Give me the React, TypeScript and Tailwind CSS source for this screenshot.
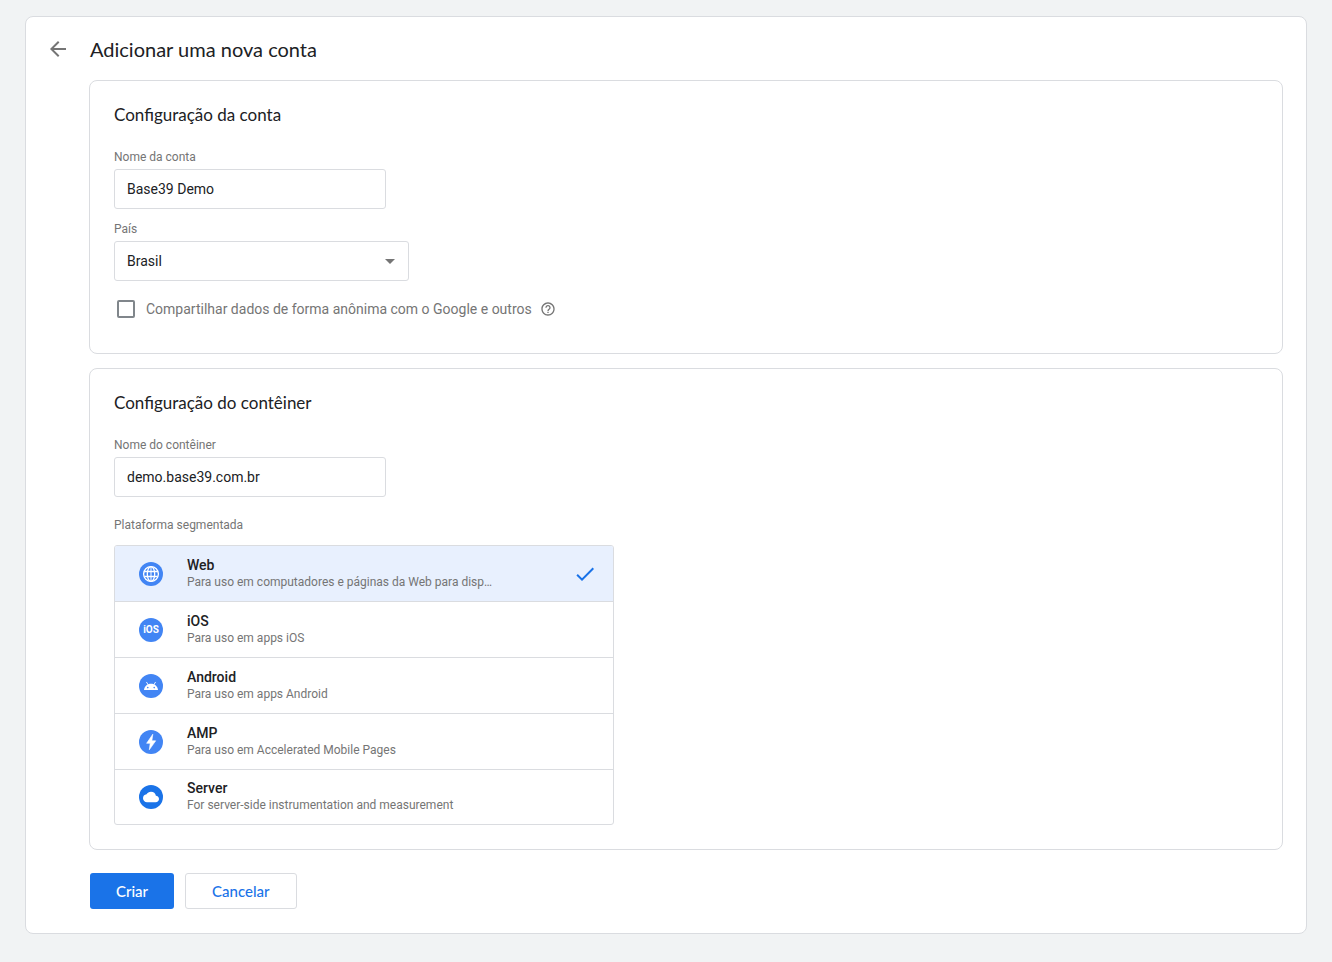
import { useState } from "react";
import type { ReactNode } from "react";
import { MdArrowBack, MdArrowDropDown, MdCheck, MdCloud, MdHelpOutline } from "react-icons/md";

function GlobeIcon() {
  return (
    <svg viewBox="0 0 24 24" className="size-6" fill="none" stroke="currentColor" strokeWidth="1.3">
      <circle cx="12" cy="12" r="7.4" />
      <ellipse cx="12" cy="12" rx="3.7" ry="7.4" />
      <path d="M5.300 9.500h13.400M5.300 14.500h13.400" />
      <path d="M12 4.600v14.800" strokeWidth="1" />
    </svg>
  );
}

function AndroidIcon() {
  return (
    <svg viewBox="0 0 24 24" className="size-6">
      <path d="M7.6 8.3l1.7 2.7M16.4 8.3l-1.700 2.700" stroke="currentColor" strokeWidth="0.9" strokeLinecap="round" />
      <path d="M5 16c.3-3.7 3.2-6.300 7-6.300s6.700 2.600 7 6.300z" fill="currentColor" />
      <circle cx="8.8" cy="13.6" r="0.8" fill="#4285f4" />
      <circle cx="15.2" cy="13.6" r="0.8" fill="#4285f4" />
    </svg>
  );
}

function BoltIcon() {
  return (
    <svg viewBox="0 0 24 24" className="size-6" fill="currentColor">
      <path d="M13.800 4.200L7.600 13.300h3.600L10.300 19.800l6.400-9h-3.800z" stroke="currentColor" strokeWidth="0.6" strokeLinejoin="round" />
    </svg>
  );
}

const platforms: { id: string; name: string; description: string; color: string; icon: ReactNode }[] = [
  {
    id: "web",
    name: "Web",
    description: "Para uso em computadores e páginas da Web para dispositivos móveis",
    color: "bg-[#4285f4]",
    icon: <GlobeIcon />,
  },
  {
    id: "ios",
    name: "iOS",
    description: "Para uso em apps iOS",
    color: "bg-[#4285f4]",
    icon: <span aria-hidden="true" className="text-[10px] leading-3 font-bold">iOS</span>,
  },
  {
    id: "android",
    name: "Android",
    description: "Para uso em apps Android",
    color: "bg-[#4285f4]",
    icon: <AndroidIcon />,
  },
  {
    id: "amp",
    name: "AMP",
    description: "Para uso em Accelerated Mobile Pages",
    color: "bg-[#4285f4]",
    icon: <BoltIcon />,
  },
  {
    id: "server",
    name: "Server",
    description: "For server-side instrumentation and measurement",
    color: "bg-[#1a73e8]",
    icon: <MdCloud size={16} />,
  },
];

const labelClass = "block text-xs leading-4 text-[#757575]";
const fieldClass =
  "block h-10 rounded-[3px] border border-[#dadce0] bg-white px-3 text-sm text-[#202124] focus:outline-none focus:border-[#1a73e8]";

function Section({ title, children }: { title: string; children: ReactNode }) {
  return (
    <section className="rounded-lg border border-[#dadce0] p-6">
      <h2 className="font-['Lato',sans-serif] text-[17px] leading-5 text-[#202124]">{title}</h2>
      {children}
    </section>
  );
}

export default function App() {
  const [accountName, setAccountName] = useState("Base39 Demo");
  const [containerName, setContainerName] = useState("demo.base39.com.br");
  const [share, setShare] = useState(false);
  const [platform, setPlatform] = useState("web");

  return (
    <div className="min-h-screen bg-[#f1f3f4] px-[25px] pt-4 pb-7 font-['Roboto',sans-serif]">
      <main className="rounded-lg border border-[#dadce0] bg-white pb-6">
        <header className="flex h-[63px] items-center gap-5 pl-5">
          <button type="button" aria-label="Voltar" className="text-[#757575]">
            <MdArrowBack size={24} />
          </button>
          <h1 className="font-['Lato',sans-serif] text-xl text-[#202124]">Adicionar uma nova conta</h1>
        </header>

        <form className="pr-[23px] pl-[63px]" onSubmit={(e) => e.preventDefault()}>
          <div className="flex flex-col gap-3.5">
            <Section title="Configuração da conta">
              <label htmlFor="account" className={`${labelClass} mt-6 mb-1`}>Nome da conta</label>
              <input
                id="account"
                type="text"
                value={accountName}
                onChange={(e) => setAccountName(e.target.value)}
                className={`${fieldClass} w-68`}
              />

              <label htmlFor="country" className={`${labelClass} mt-3 mb-1`}>País</label>
              <div className="relative w-[295px] max-w-full">
                <select id="country" defaultValue="BR" className={`${fieldClass} w-full appearance-none`}>
                  <option value="BR">Brasil</option>
                  <option value="PT">Portugal</option>
                </select>
                <MdArrowDropDown
                  size={24}
                  className="pointer-events-none absolute top-2 right-[7px] text-[#757575]"
                />
              </div>

              <div className="mt-4 mb-2 flex items-center pl-[3px]">
                <input
                  id="share"
                  type="checkbox"
                  checked={share}
                  onChange={(e) => setShare(e.target.checked)}
                  className="size-[18px] appearance-none rounded-xs border-2 border-[#80868b] checked:border-[#1a73e8] checked:bg-[#1a73e8]"
                />
                <label htmlFor="share" className="ml-[11px] text-sm leading-6 text-[#757575]">
                  Compartilhar dados de forma anônima com o Google e outros
                </label>
                <button type="button" aria-label="Ajuda" className="ml-2 text-[#757575]">
                  <MdHelpOutline size={16} />
                </button>
              </div>
            </Section>

            <Section title="Configuração do contêiner">
              <label htmlFor="container" className={`${labelClass} mt-6 mb-1`}>Nome do contêiner</label>
              <input
                id="container"
                type="text"
                value={containerName}
                onChange={(e) => setContainerName(e.target.value)}
                className={`${fieldClass} w-68`}
              />

              <fieldset className="mt-5">
                <legend className={labelClass}>Plataforma segmentada</legend>
                <div className="mt-3 max-w-[500px] overflow-hidden rounded-[3px] border border-[#dadce0]">
                  {platforms.map((p) => (
                    <label
                      key={p.id}
                      className="flex h-14 cursor-pointer items-center border-b border-[#dadce0] pr-4 pl-6 last:h-[54px] last:border-b-0 has-checked:bg-[#e8f0fe]"
                    >
                      <input
                        type="radio"
                        name="platform"
                        value={p.id}
                        checked={platform === p.id}
                        onChange={() => setPlatform(p.id)}
                        className="sr-only"
                      />
                      <span className={`flex size-6 shrink-0 items-center justify-center rounded-full text-white ${p.color}`}>
                        {p.icon}
                      </span>
                      <span className="ml-6 w-[308px] min-w-0">
                        <span className="block text-sm leading-4 font-medium text-[#202124]">{p.name}</span>
                        <span className="block truncate text-xs leading-[18px] text-[#757575]">{p.description}</span>
                      </span>
                      {platform === p.id && <MdCheck size={24} className="ml-auto shrink-0 text-[#1a73e8]" />}
                    </label>
                  ))}
                </div>
              </fieldset>
            </Section>
          </div>

          <div className="mt-[23px] flex gap-[11px] pl-px font-['Lato',sans-serif] text-[15px] font-medium">
            <button type="submit" className="h-9 rounded-[3px] bg-[#1a73e8] px-[26px] text-white">
              Criar
            </button>
            <button type="button" className="h-9 rounded-[3px] border border-[#dadce0] px-[26px] text-[#1a73e8]">
              Cancelar
            </button>
          </div>
        </form>
      </main>
    </div>
  );
}
